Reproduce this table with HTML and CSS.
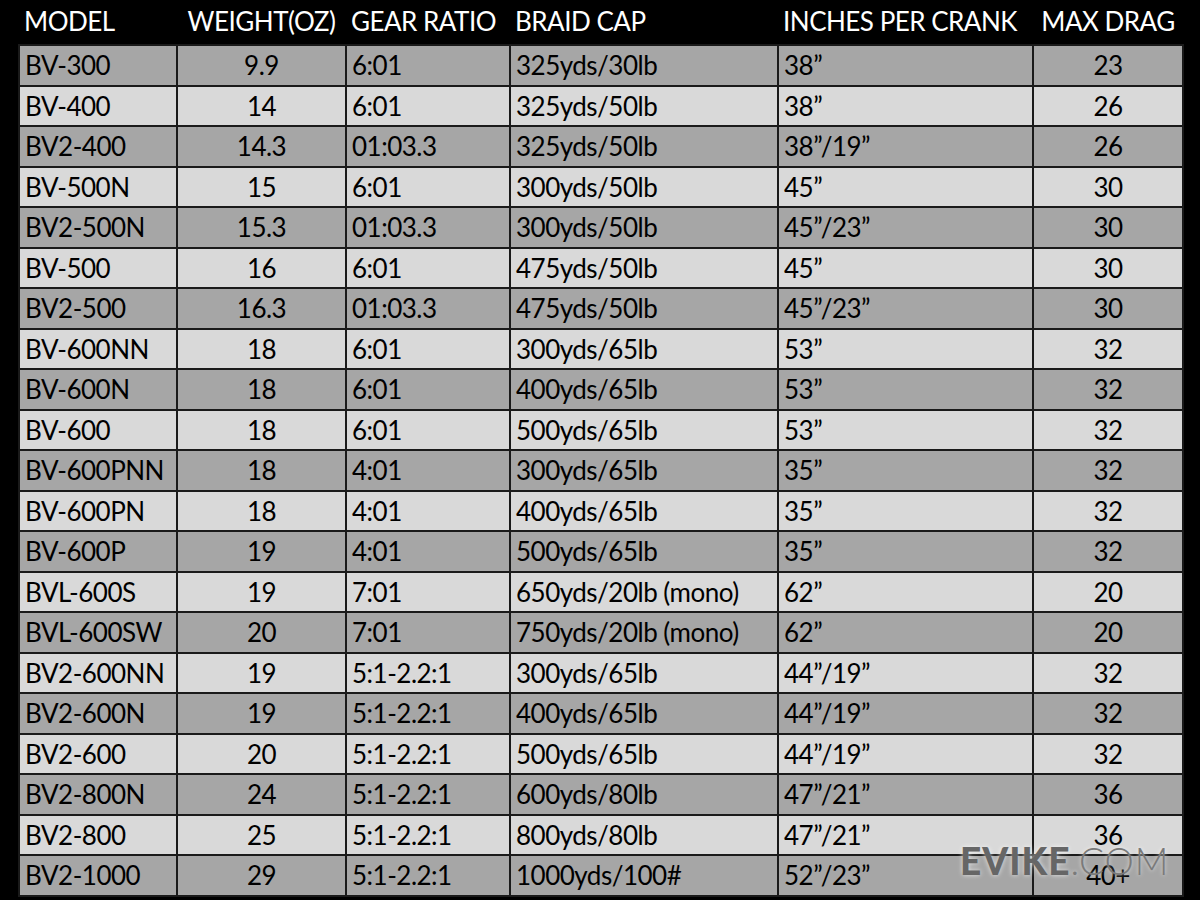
FILE: index.html
```html
<!DOCTYPE html>
<html>
<head>
<meta charset="utf-8">
<link rel="stylesheet" href="styles.css">
</head>
<body>
<div class="sheet">
<table class="specs">
<colgroup>
<col class="c-model"><col class="c-weight"><col class="c-gear"><col class="c-braid"><col class="c-inches"><col class="c-drag">
</colgroup>
<thead>
<tr><th class="left">MODEL</th><th>WEIGHT(OZ)</th><th class="left">GEAR RATIO</th><th class="left">BRAID CAP</th><th class="left">INCHES PER CRANK</th><th>MAX DRAG</th></tr>
</thead>
<tbody>
<tr class="dark"><td>BV-300</td><td class="num">9.9</td><td>6:01</td><td>325yds/30lb</td><td>38”</td><td class="num">23</td></tr>
<tr class="light"><td>BV-400</td><td class="num">14</td><td>6:01</td><td>325yds/50lb</td><td>38”</td><td class="num">26</td></tr>
<tr class="dark"><td>BV2-400</td><td class="num">14.3</td><td>01:03.3</td><td>325yds/50lb</td><td>38”/19”</td><td class="num">26</td></tr>
<tr class="light"><td>BV-500N</td><td class="num">15</td><td>6:01</td><td>300yds/50lb</td><td>45”</td><td class="num">30</td></tr>
<tr class="dark"><td>BV2-500N</td><td class="num">15.3</td><td>01:03.3</td><td>300yds/50lb</td><td>45”/23”</td><td class="num">30</td></tr>
<tr class="light"><td>BV-500</td><td class="num">16</td><td>6:01</td><td>475yds/50lb</td><td>45”</td><td class="num">30</td></tr>
<tr class="dark"><td>BV2-500</td><td class="num">16.3</td><td>01:03.3</td><td>475yds/50lb</td><td>45”/23”</td><td class="num">30</td></tr>
<tr class="light"><td>BV-600NN</td><td class="num">18</td><td>6:01</td><td>300yds/65lb</td><td>53”</td><td class="num">32</td></tr>
<tr class="dark"><td>BV-600N</td><td class="num">18</td><td>6:01</td><td>400yds/65lb</td><td>53”</td><td class="num">32</td></tr>
<tr class="light"><td>BV-600</td><td class="num">18</td><td>6:01</td><td>500yds/65lb</td><td>53”</td><td class="num">32</td></tr>
<tr class="dark"><td>BV-600PNN</td><td class="num">18</td><td>4:01</td><td>300yds/65lb</td><td>35”</td><td class="num">32</td></tr>
<tr class="light"><td>BV-600PN</td><td class="num">18</td><td>4:01</td><td>400yds/65lb</td><td>35”</td><td class="num">32</td></tr>
<tr class="dark"><td>BV-600P</td><td class="num">19</td><td>4:01</td><td>500yds/65lb</td><td>35”</td><td class="num">32</td></tr>
<tr class="light"><td>BVL-600S</td><td class="num">19</td><td>7:01</td><td>650yds/20lb (mono)</td><td>62”</td><td class="num">20</td></tr>
<tr class="dark"><td>BVL-600SW</td><td class="num">20</td><td>7:01</td><td>750yds/20lb (mono)</td><td>62”</td><td class="num">20</td></tr>
<tr class="light"><td>BV2-600NN</td><td class="num">19</td><td>5:1-2.2:1</td><td>300yds/65lb</td><td>44”/19”</td><td class="num">32</td></tr>
<tr class="dark"><td>BV2-600N</td><td class="num">19</td><td>5:1-2.2:1</td><td>400yds/65lb</td><td>44”/19”</td><td class="num">32</td></tr>
<tr class="light"><td>BV2-600</td><td class="num">20</td><td>5:1-2.2:1</td><td>500yds/65lb</td><td>44”/19”</td><td class="num">32</td></tr>
<tr class="dark"><td>BV2-800N</td><td class="num">24</td><td>5:1-2.2:1</td><td>600yds/80lb</td><td>47”/21”</td><td class="num">36</td></tr>
<tr class="light"><td>BV2-800</td><td class="num">25</td><td>5:1-2.2:1</td><td>800yds/80lb</td><td>47”/21”</td><td class="num">36</td></tr>
<tr class="dark"><td>BV2-1000</td><td class="num">29</td><td>5:1-2.2:1</td><td>1000yds/100#</td><td>52”/23”</td><td class="num">40+</td></tr>
</tbody>
</table>
<div class="watermark"><span class="wm-bold">EVIKE</span><span class="wm-light">.COM</span></div>
</div>
</body>
</html>
```
FILE: styles.css
```css
html, body {
  margin: 0;
  padding: 0;
  background: #000;
}
body {
  width: 1200px;
  height: 900px;
  overflow: hidden;
  font-family: Lato, "Open Sans", sans-serif;
}
.sheet {
  position: relative;
  padding-left: 18px;
  width: 1164px;
}
.specs {
  width: 1164px;
  border-collapse: collapse;
  table-layout: fixed;
  font-size: 26px;
  letter-spacing: -0.5px;
  color: #000;
}
.c-model { width: 158px; }
.c-weight { width: 169px; }
.c-gear { width: 164px; }
.c-braid { width: 268px; }
.c-inches { width: 255px; }
.c-drag { width: 150px; }

.specs th {
  height: 42px;
  padding: 0 0 2px 0;
  color: #fff;
  font-weight: normal;
  text-align: center;
  white-space: nowrap;
  vertical-align: middle;
  border: none;
}
.specs th.left {
  text-align: left;
  padding-left: 5px;
}
.specs td {
  height: 38.5px;
  padding: 0 0 0 5px;
  border: 2px solid #1a1a1a;
  white-space: nowrap;
  vertical-align: middle;
  line-height: 1;
}
.specs td.num {
  text-align: center;
  padding-left: 0;
}
.specs tr.dark td { background: #a6a6a6; }
.specs tr.light td { background: #d9d9d9; }

.watermark {
  position: absolute;
  left: 960px;
  top: 842px;
  font-size: 37px;
  letter-spacing: 1px;
  line-height: 1;
  white-space: nowrap;
}
.wm-bold {
  font-weight: 900;
  color: #666;
  text-shadow: 0 0 5px rgba(255,255,255,0.75);
}
.wm-light {
  font-weight: 300;
  color: #7a7a7a;
  text-shadow: 0 0 4px rgba(255,255,255,0.65);
}
```
